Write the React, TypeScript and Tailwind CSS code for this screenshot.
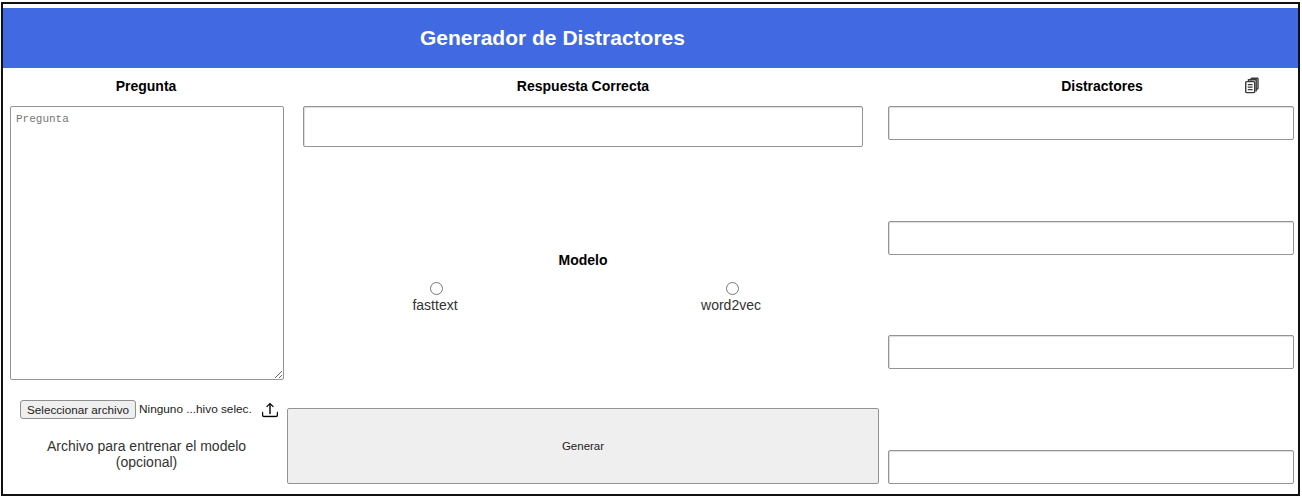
import { BsUpload } from "react-icons/bs";

function CopyIcon() {
  return (
    <svg width="16" height="17" viewBox="0 0 16 17" fill="none" stroke="#3a3a3a" strokeWidth="1.4">
      <path d="M7 3.5V1.9c0-.4.3-.7.7-.7h5.6c.4 0 .7.3.7.7v9.4c0 .4-.3.7-.7.7h-1" />
      <path d="M4.5 4V2.8h7.7v11h-.8" />
      <rect x="1.7" y="4.6" width="9" height="11" rx="1" />
      <path d="M3.8 7.6h4.8M3.8 10.1h4.8M3.8 12.6h4.8" />
    </svg>
  );
}

function Distractor() {
  return <input type="text" className="w-full h-[34px] bg-white border border-[#949494] rounded-[2px] shadow-[inset_1px_1px_1px_#ddd]" />;
}

function Title({ children }: { children: React.ReactNode }) {
  return <h2 className="h-[36px] flex items-center justify-center text-[14px] font-bold text-black">{children}</h2>;
}

export default function App() {
  return (
    <div className="ml-[1px] mt-[2px] w-[1299px] h-[494px] border-2 border-[#111] bg-white pt-[4px] text-[#222] font-['Liberation_Sans',Arial,sans-serif]">
      <header className="h-[60px] bg-[#4169e1] flex items-center pl-[417px]">
        <h1 className="text-[21px] font-bold text-white">Generador de Distractores</h1>
      </header>

      <main className="flex">
        <section className="w-[284px] flex flex-col">
          <div className="pl-[2px]">
            <Title>Pregunta</Title>
          </div>
          <textarea
            placeholder="Pregunta"
            className="mt-[2px] ml-[7px] w-[274px] h-[274px] bg-white border border-[#949494] rounded-[2px] px-[5px] pt-[4px] text-[11px] font-['Liberation_Mono',monospace] placeholder:text-[#777] outline-none"
          />
          <div className="ml-[17px] mt-[20px] h-[20px] flex items-center">
            <button className="w-[116px] h-[19px] -mt-[2px] bg-[#efefef] border border-[#8f8f8f] rounded-[3px] text-[11.7px] text-[#222]">Seleccionar archivo</button>
            <span className="ml-[3px] text-[11.8px] text-[#222]">Ninguno ...hivo selec.</span>
            <BsUpload className="ml-[10px] w-[16px] h-[16px] stroke-[0.4px] text-black" />
          </div>
          <p className="mt-[18px] mx-auto pl-[3px] w-[233px] text-center text-[14px] leading-[16px] text-[#333]">Archivo para entrenar el modelo (opcional)</p>
        </section>

        <section className="w-[592px] flex flex-col">
          <Title>Respuesta Correcta</Title>
          <input type="text" className="mt-[2px] mx-[16px] h-[41px] bg-white border border-[#949494] rounded-[2px] shadow-[inset_1px_1px_1px_#ddd]" />
          <div className="mt-[105px] h-[156px] flex flex-col">
            <h3 className="text-center text-[14px] leading-[16px] font-bold text-black">Modelo</h3>
            <div className="mt-[10px] flex">
              <label className="w-[296px] flex flex-col items-center text-[14px] leading-[16px] text-[#333]">
                <input type="radio" name="modelo" className="w-[13px] h-[13px] mt-[4px] mb-[2px] ml-[5px] mr-[3px]" />
                fasttext
              </label>
              <label className="ml-[1px] w-[294px] flex flex-col items-center text-[14px] leading-[16px] text-[#333]">
                <input type="radio" name="modelo" className="w-[13px] h-[13px] mt-[4px] mb-[2px] ml-[5px] mr-[3px]" />
                word2vec
              </label>
            </div>
          </div>
          <button className="h-[76px] pt-[2px] bg-[#efefef] border border-[#949494] rounded-[2px] text-[11.5px] text-[#222]">Generar</button>
        </section>

        <section className="ml-[9px] w-[406px] flex flex-col">
          <div className="relative pl-[22px]">
            <Title>Distractores</Title>
            <span className="absolute left-[356px] top-[9px]"><CopyIcon /></span>
          </div>
          <div className="mt-[2px] h-[378px] flex flex-col justify-between">
            <Distractor />
            <Distractor />
            <Distractor />
            <Distractor />
          </div>
        </section>
      </main>
    </div>
  );
}
